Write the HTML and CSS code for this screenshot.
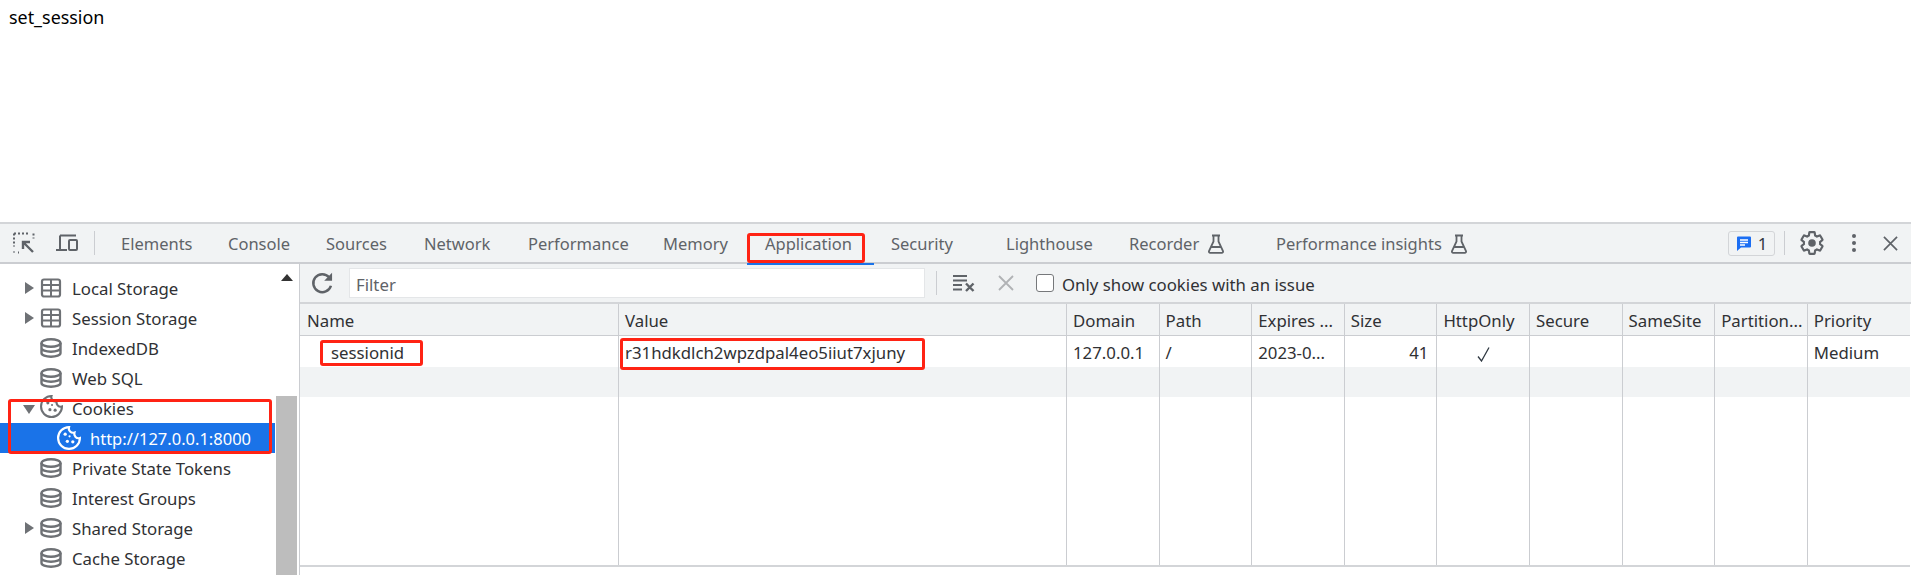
FILE: index.html
```html
<!DOCTYPE html>
<html lang="en">
<head>
<meta charset="utf-8">
<title>set_session</title>
<link rel="stylesheet" href="styles.css">
</head>
<body>
<svg class="defs" width="0" height="0" aria-hidden="true">
  <symbol id="i-table" viewBox="0 0 22 22"><rect x="2" y="2.500" width="18" height="17" rx="2" fill="none" stroke="currentColor" stroke-width="2.200"/><path d="M2 8h18M2 13.500h18M11 2.500v17" fill="none" stroke="currentColor" stroke-width="2"/></symbol>
  <symbol id="i-db" viewBox="0 0 22 22"><g fill="none" stroke="currentColor" stroke-width="2.400"><ellipse cx="11" cy="6" rx="9.500" ry="3.800"/><path d="M1.500 6v10c0 2.200 4.300 3.800 9.500 3.800s9.500-1.600 9.500-3.800V6M1.500 11c0 2.200 4.300 3.800 9.500 3.800s9.500-1.600 9.500-3.800"/></g></symbol>
  <symbol id="i-cookie" viewBox="1 1 22 22"><path d="M12 2a10 10 0 1 0 10 10 4 4 0 0 1-5-5 4 4 0 0 1-5-5z" fill="none" stroke="currentColor" stroke-width="2"/><circle cx="8.500" cy="8.500" r="1.500" fill="currentColor"/><circle cx="15.500" cy="15.500" r="1.500" fill="currentColor"/><circle cx="10.500" cy="15" r="1.500" fill="currentColor"/><circle cx="12.500" cy="10.500" r="1" fill="currentColor"/></symbol>
  <symbol id="i-flask" viewBox="0 0 18 20"><path d="M5 1.500h8M6.500 1.500v6L2 17c-.4 1 .2 1.800 1.200 1.800h11.600c1 0 1.600-.8 1.200-1.800L11.500 7.500v-6M4.500 13h9" fill="none" stroke="currentColor" stroke-width="1.800"/></symbol>
</svg>

<main class="page">set_session</main>

<section class="devtools">
  <header class="tabbar">
    <div class="tool-icons">
      <svg class="ic-inspect" viewBox="0 0 22 22"><path d="M1 1.500h15M1 1.500v13M1 20.500v-1M5 20.500h1M20.500 1.500v5" fill="none" stroke="#5f6368" stroke-width="2" stroke-dasharray="2 2"/><path d="M20 20 10.500 10.500M10 17v-7h7" fill="none" stroke="#5f6368" stroke-width="2.400"/></svg>
      <svg class="ic-device" viewBox="0 0 23 22"><path d="M5 3.500h16M5 3.500V17M1 18h11" fill="none" stroke="#5f6368" stroke-width="2"/><rect x="14" y="8" width="8" height="10" rx="1" fill="none" stroke="#5f6368" stroke-width="2"/></svg>
      <span class="vrule"></span>
    </div>
    <nav class="tabs">
      <span class="tab">Elements</span>
      <span class="tab">Console</span>
      <span class="tab">Sources</span>
      <span class="tab">Network</span>
      <span class="tab">Performance</span>
      <span class="tab">Memory</span>
      <span class="tab tab-active">Application</span>
      <span class="tab">Security</span>
      <span class="tab">Lighthouse</span>
      <span class="tab">Recorder <svg class="flask"><use href="#i-flask"/></svg></span>
      <span class="tab">Performance insights <svg class="flask"><use href="#i-flask"/></svg></span>
    </nav>
    <div class="tab-right">
      <span class="issues"><svg viewBox="0 0 16 16" class="issue-ic"><path d="M2 1h12a1 1 0 0 1 1 1v9a1 1 0 0 1-1 1H5l-4 3.500V2a1 1 0 0 1 1-1z" fill="#1b6ef3"/><path d="M4 4.500h8M4 7h8M4 9.500h5" stroke="#fff" stroke-width="1.300"/></svg><span>1</span></span>
      <span class="vrule"></span>
      <svg class="ic-gear" viewBox="0 0 24 24"><path d="M19.430 12.980c.04-.32.07-.64.07-.98 0-.34-.03-.66-.07-.98l2.110-1.650c.19-.15.24-.42.12-.64l-2-3.460c-.12-.22-.39-.3-.61-.22l-2.490 1c-.52-.4-1.080-.73-1.690-.98l-.38-2.650C14.460 2.180 14.250 2 14 2h-4c-.25 0-.46.18-.49.42l-.38 2.650c-.61.25-1.170.59-1.690.98l-2.490-1c-.23-.09-.49 0-.61.22l-2 3.460c-.13.22-.07.49.12.64l2.110 1.650c-.04.32-.07.65-.07.98 0 .33.03.66.07.98l-2.110 1.650c-.19.15-.24.42-.12.64l2 3.460c.12.22.39.3.61.22l2.490-1c.52.4 1.080.73 1.690.98l.38 2.650c.03.24.24.42.49.42h4c.25 0 .46-.18.49-.42l.38-2.650c.61-.25 1.170-.59 1.690-.98l2.490 1c.23.09.49 0 .61-.22l2-3.460c.12-.22.07-.49-.12-.64l-2.110-1.650z" fill="none" stroke="#5f6368" stroke-width="2"/><circle cx="12" cy="12" r="3.500" fill="#5f6368"/></svg>
      <svg class="ic-dots" viewBox="0 0 6 20"><circle cx="3" cy="3" r="2" fill="#5f6368"/><circle cx="3" cy="10" r="2" fill="#5f6368"/><circle cx="3" cy="17" r="2" fill="#5f6368"/></svg>
      <svg class="ic-close" viewBox="0 0 16 16"><path d="M1 1l14 14M15 1 1 15" stroke="#5f6368" stroke-width="1.800"/></svg>
    </div>
  </header>

  <div class="panes">
    <aside class="sidebar">
      <ul class="tree">
        <li class="node"><i class="arrow"></i><svg class="node-ic"><use href="#i-table"/></svg>Local Storage</li>
        <li class="node"><i class="arrow"></i><svg class="node-ic"><use href="#i-table"/></svg>Session Storage</li>
        <li class="node"><svg class="node-ic"><use href="#i-db"/></svg>IndexedDB</li>
        <li class="node"><svg class="node-ic"><use href="#i-db"/></svg>Web SQL</li>
        <li class="node node-cookie"><i class="arrow arrow-open"></i><svg class="node-ic"><use href="#i-cookie"/></svg>Cookies</li>
        <li class="node node-child node-selected"><svg class="node-ic"><use href="#i-cookie"/></svg>http://127.0.0.1:8000</li>
        <li class="node"><svg class="node-ic"><use href="#i-db"/></svg>Private State Tokens</li>
        <li class="node"><svg class="node-ic"><use href="#i-db"/></svg>Interest Groups</li>
        <li class="node"><i class="arrow"></i><svg class="node-ic"><use href="#i-db"/></svg>Shared Storage</li>
        <li class="node"><svg class="node-ic"><use href="#i-db"/></svg>Cache Storage</li>
      </ul>
      <div class="scrollbar"><i class="scroll-up"></i><div class="scroll-thumb"></div></div>
    </aside>

    <div class="content">
      <div class="filterbar">
        <svg class="ic-refresh" viewBox="0 0 24 24"><path d="M19.500 14a8 8 0 1 1-1.600-7.500" fill="none" stroke="#5f6368" stroke-width="2.200"/><path d="M20.500 2.500v7h-7z" fill="#5f6368"/></svg>
        <div class="filter-input">Filter</div>
        <span class="vrule"></span>
        <svg class="ic-clear" viewBox="0 0 22 18"><path d="M0 2h14M0 6.500h14M0 11h9M0 15.500h9" stroke="#5f6368" stroke-width="1.800"/><path d="M13 9.500l7.500 7.500M20.500 9.500 13 17" stroke="#5f6368" stroke-width="2.400"/></svg>
        <svg class="ic-x" viewBox="0 0 16 16"><path d="M1 1l14 14M15 1 1 15" stroke="#b0b2b5" stroke-width="1.800"/></svg>
        <span class="check"></span>
        <span class="check-label">Only show cookies with an issue</span>
      </div>
      <table class="cookies">
        <colgroup>
          <col class="c-name"><col class="c-value"><col class="c-std"><col class="c-std"><col class="c-std"><col class="c-std"><col class="c-std"><col class="c-std"><col class="c-std"><col class="c-std"><col>
        </colgroup>
        <thead>
          <tr><th>Name</th><th>Value</th><th>Domain</th><th>Path</th><th>Expires ...</th><th>Size</th><th>HttpOnly</th><th>Secure</th><th>SameSite</th><th>Partition...</th><th>Priority</th></tr>
        </thead>
        <tbody>
          <tr class="row-a"><td class="cell-indent">sessionid</td><td>r31hdkdlch2wpzdpal4eo5iiut7xjuny</td><td>127.0.0.1</td><td>/</td><td>2023-0...</td><td class="cell-num">41</td><td class="cell-center"><svg class="ic-check" viewBox="0 0 13 15" role="img" aria-label="true"><path d="M1 9.500 4.500 14 12 .5" fill="none" stroke="#303942" stroke-width="1.300"/></svg></td><td></td><td></td><td></td><td>Medium</td></tr>
          <tr class="row-b"><td></td><td></td><td></td><td></td><td></td><td></td><td></td><td></td><td></td><td></td><td></td></tr>
          <tr class="row-fill"><td></td><td></td><td></td><td></td><td></td><td></td><td></td><td></td><td></td><td></td><td></td></tr>
        </tbody>
      </table>
    </div>
  </div>

  <span class="mark mark-tab"></span>
  <span class="mark mark-cookies"></span>
  <span class="mark mark-name"></span>
  <span class="mark mark-value"></span>
</section>
</body>
</html>
```

FILE: styles.css
```css
* { box-sizing: border-box; }
html, body { margin: 0; height: 575px; overflow: hidden; background: #fff; }
body {
  display: flex;
  flex-direction: column;
  font-family: "Noto Sans", "Liberation Sans", sans-serif;
  font-size: 16.8px;
  color: #202124;
}
.defs { position: absolute; }
.page { height: 222px; padding: 5px 9px; color: #000; font-size: 17.9px; line-height: 24px; }

.devtools { position: relative; flex: 1; display: flex; flex-direction: column; min-height: 0; }

/* Top tab bar */
.tabbar {
  height: 42px;
  display: flex;
  align-items: center;
  background: #f1f3f4;
  border-top: 2px solid #d3d5d8;
  border-bottom: 2px solid #cbcdd1;
}
.tool-icons { width: 121px; display: flex; align-items: center; padding-left: 13px; }
.ic-inspect { width: 22px; height: 22px; }
.ic-device { width: 23px; height: 22px; margin-left: 20px; }
.vrule { width: 1px; height: 24px; background: #cbcdd1; }
.tool-icons .vrule { margin-left: 16px; }

.tabs {
  display: grid;
  grid-template-columns: 107px 98px 98px 104px 135px 102px 126px 115px 123px 147px auto;
  height: 100%;
  flex: 1;
  align-items: center;
  padding-top: 1px;
  color: #5f6368;
  font-size: 16.5px;
}
.tab { display: flex; align-items: center; white-space: nowrap; }
.flask { width: 18px; height: 20px; margin-left: 8px; color: #5f6368; }

.tab-right { display: flex; align-items: center; padding-right: 13px; }
.issues {
  width: 47px; height: 25px;
  display: flex; align-items: center; justify-content: center; gap: 6px;
  border: 1px solid #d3d5d8; border-radius: 3px;
  color: #303942;
}
.issue-ic { width: 16px; height: 17px; }
.tab-right .vrule { margin-left: 9px; }
.ic-gear { width: 26px; height: 26px; margin-left: 14px; }
.ic-dots { width: 6px; height: 20px; margin-left: 26px; }
.ic-close { width: 15px; height: 15px; margin-left: 26px; }

/* Panes */
.panes { flex: 1; display: flex; min-height: 0; }
.sidebar { width: 300px; display: flex; background: #fff; border-right: 1px solid #cbcdd1; overflow: hidden; }
.tree { list-style: none; margin: 0; padding: 9px 0 0; width: 275px; flex: none; }
.node { position: relative; height: 30px; display: flex; align-items: center; padding-left: 40px; color: #303134; white-space: nowrap; }
.node-ic { width: 22px; height: 22px; margin-right: 10px; color: #6e7175; flex: none; }
.node-cookie .node-ic { width: 23px; height: 23px; margin-right: 9px; margin-top: -4px; }
.arrow { position: absolute; left: 25px; top: 9px; width: 0; height: 0; border-left: 9px solid #6e7175; border-top: 6px solid transparent; border-bottom: 6px solid transparent; }
.arrow-open { left: 23px; top: 12px; border-top: 9px solid #6e7175; border-left: 6px solid transparent; border-right: 6px solid transparent; border-bottom: 0; }
.node-child { padding-left: 57px; font-size: 16.5px; }
.node-child .node-ic { width: 24px; height: 24px; margin-right: 9px; }
.node-selected { background: #1a73e8; color: #fff; }
.node-selected .node-ic { color: #fff; }

.scrollbar { flex: 1; position: relative; }
.scroll-up { position: absolute; left: 6px; top: 10px; width: 0; height: 0; border-bottom: 7px solid #333; border-left: 6px solid transparent; border-right: 6px solid transparent; }
.scroll-thumb { position: absolute; left: 1px; right: 2px; top: 132px; bottom: 0; background: #bdbdbd; }

.content { flex: 1; display: flex; flex-direction: column; min-width: 0; }

/* Filter bar */
.filterbar {
  height: 40px;
  display: flex;
  align-items: center;
  background: #f1f3f4;
  border-bottom: 2px solid #d3d5d8;
  padding-left: 9px;
}
.ic-refresh { width: 27px; height: 27px; }
.filter-input {
  width: 576px; height: 30px;
  margin-left: 13px;
  padding: 2px 0 0 6px;
  background: #fff;
  border: 1px solid #e4e6e8;
  display: flex; align-items: center;
  color: #5f6368;
}
.filterbar .vrule { margin-left: 11px; }
.ic-clear { width: 22px; height: 18px; margin-left: 16px; }
.ic-x { width: 16px; height: 16px; margin-left: 23px; }
.check { width: 18px; height: 18px; margin-left: 22px; background: #fff; border: 1.500px solid #76787b; border-radius: 3px; }
.check-label { margin-left: 8px; padding-top: 2px; color: #303134; }

/* Cookie table */
.cookies {
  table-layout: fixed;
  border-collapse: separate;
  border-spacing: 0;
  width: 1610px;
  height: 263px;
  flex: none;
  font-size: 16.8px;
  border-bottom: 2px solid #d3d5d8;
}
.c-name { width: 318px; }
.c-value { width: 448px; }
.c-std { width: 92.6px; }
.cookies th, .cookies td {
  padding: 1px 0 0 6px;
  font-weight: 400;
  text-align: left;
  border-left: 1px solid #cbcdd1;
  white-space: nowrap;
  overflow: hidden;
  color: #303134;
}
.cookies th:first-child, .cookies td:first-child { border-left: 0; }
.cookies th:first-child { padding-left: 7px; }
.cookies thead tr { height: 32px; background: #f1f3f4; }
.cookies th { border-bottom: 1px solid #cbcdd1; }
.row-a { height: 31px; }
.row-b { height: 30px; background: #f1f3f4; }
.cookies .cell-indent { padding-left: 31px; }
.cookies .cell-num { text-align: right; padding-right: 8px; }
.cookies .cell-center { text-align: center; padding-left: 0; }
.ic-check { width: 13px; height: 15px; display: inline-block; vertical-align: middle; }

/* Red annotation boxes drawn over the screenshot */
.mark { position: absolute; border: 3px solid #ff2314; border-radius: 3px; pointer-events: none; }
.mark-tab { left: 747px; top: 11px; width: 118px; height: 30px; }
.mark-tab::after { content: ""; position: absolute; left: -3px; top: 27px; width: 127px; height: 2px; background: #1a73e8; }
.mark-cookies { left: 8px; top: 177px; width: 264px; height: 55px; }
.mark-name { left: 320px; top: 118px; width: 103px; height: 26px; }
.mark-value { left: 620px; top: 116px; width: 305px; height: 32px; }
```
